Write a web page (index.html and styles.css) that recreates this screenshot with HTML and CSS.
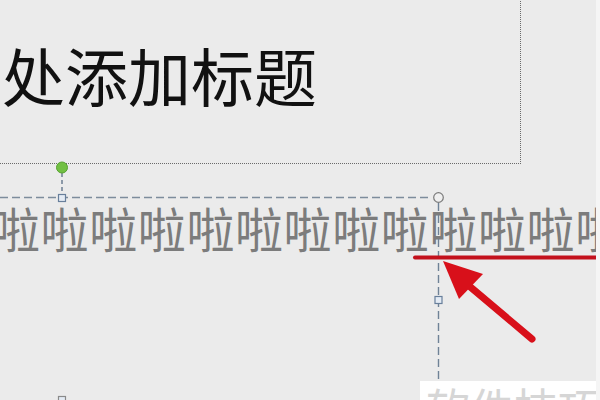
FILE: index.html
```html
<!DOCTYPE html>
<html lang="zh">
<head>
<meta charset="utf-8">
<link rel="stylesheet" href="styles.css">
</head>
<body>
<div class="slide">
  <div class="title-box">
    <div class="title-text">处添加标题</div>
  </div>
  <div class="body-text">啦啦啦啦啦啦啦啦啦啦啦啦啦</div>
  <svg class="overlay" width="600" height="400" viewBox="0 0 600 400">
    <!-- rotation handle -->
    <line x1="62" y1="173" x2="62" y2="194" stroke="#6d7f93" stroke-width="1.5" stroke-dasharray="4 3"/>
    <!-- text box outline -->
    <line x1="0" y1="197.5" x2="432" y2="197.5" stroke="#7d8c9c" stroke-width="1.6" stroke-dasharray="8 4"/>
    <line x1="438.5" y1="203" x2="438.5" y2="400" stroke="#6f8296" stroke-width="1.4" stroke-dasharray="8 4"/>
    <!-- red underline -->
    <line x1="415" y1="257.5" x2="600" y2="257.5" stroke="#c3111c" stroke-width="4" stroke-linecap="round"/>
    <!-- handles -->
    <circle cx="62" cy="167.5" r="5.5" fill="#72c043" stroke="#58a332" stroke-width="1"/>
    <rect x="58.5" y="194.5" width="7" height="7" fill="#e4ebf4" stroke="#687f9b" stroke-width="1.2"/>
    <circle cx="438.5" cy="197.5" r="4.8" fill="#efefef" stroke="#7a7a7a" stroke-width="1.2"/>
    <rect x="435" y="296.5" width="7" height="7" fill="#e4ebf4" stroke="#687f9b" stroke-width="1.2"/>
    <rect x="58.5" y="396.5" width="7" height="7" fill="#e4ebf4" stroke="#8a8a8a" stroke-width="1.2"/>
    <!-- red arrow -->
    <line x1="468" y1="285" x2="532" y2="339" stroke="#d8101a" stroke-width="7" stroke-linecap="round"/>
    <polygon points="443,261 483,274 459,299" fill="#d8101a"/>
  </svg>
  <div class="watermark">软件技巧</div>
  <div class="edge"></div>
</div>
</body>
</html>
```

FILE: styles.css
```css
html, body {
  margin: 0;
  padding: 0;
}
body {
  width: 600px;
  height: 400px;
  overflow: hidden;
  background: #ebebeb;
  font-family: "Noto Sans CJK SC", "Noto Sans", sans-serif;
}
.slide {
  position: relative;
  width: 600px;
  height: 400px;
  overflow: hidden;
  background: #ebebeb;
}
.title-box {
  position: absolute;
  left: -10px;
  top: -10px;
  width: 529px;
  height: 172px;
  border: 1px dotted #6a6a6a;
}
.title-text {
  position: absolute;
  left: 11px;
  top: 51px;
  font-size: 63px;
  line-height: 1;
  color: #111;
  white-space: nowrap;
  font-weight: 400;
}
.body-text {
  position: absolute;
  left: -8px;
  top: 203px;
  font-size: 48px;
  letter-spacing: 0.6px;
  line-height: 1;
  color: #7c7c7c;
  white-space: nowrap;
}
.overlay {
  position: absolute;
  left: 0;
  top: 0;
}
.watermark {
  position: absolute;
  left: 420px;
  top: 381px;
  width: 180px;
  height: 40px;
  background: #ffffff;
  color: #d6d6d6;
  font-size: 44px;
  line-height: 1;
  padding: 4px 0 0 6px;
  box-sizing: border-box;
  white-space: nowrap;
  overflow: hidden;
}
.edge {
  position: absolute;
  right: 0;
  top: 0;
  width: 4px;
  height: 400px;
  background: #f5f5f5;
}
```
